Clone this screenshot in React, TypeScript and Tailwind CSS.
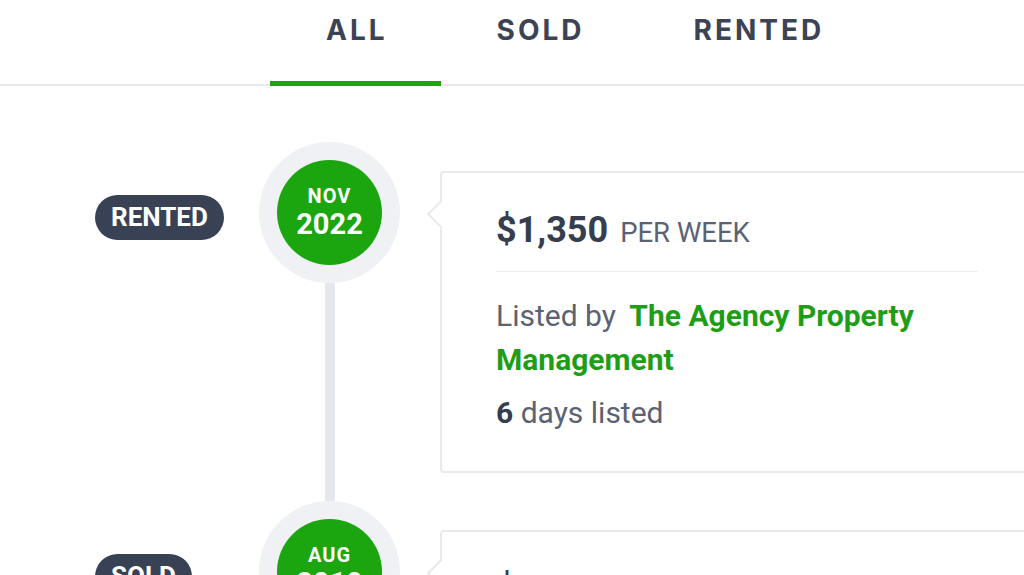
import React from 'react';

type Entry = {
  status: string;
  month: string;
  year: string;
  price: string;
  unit: string;
  agency: string;
  days: string;
};

const ENTRIES: Entry[] = [
  {
    status: 'RENTED',
    month: 'NOV',
    year: '2022',
    price: '$1,350',
    unit: 'PER WEEK',
    agency: 'The Agency Property Management',
    days: '6',
  },
  {
    status: 'SOLD',
    month: 'AUG',
    year: '2019',
    price: '$1,640,000',
    unit: '',
    agency: 'The Agency Eastern Suburbs',
    days: '21',
  },
];

const TABS = ['ALL', 'SOLD', 'RENTED'];

export default function App() {
  return (
    <div
      className="h-[575px] w-[1024px] overflow-hidden bg-white"
      style={{ fontFamily: 'Roboto, "Liberation Sans", sans-serif' }}
    >
      {/* Tabs */}
      <div className="flex h-[86px] border-b-2 border-[#e9eaed] pl-[270px]">
        {TABS.map((t, i) => (
          <div
            key={t}
            className="relative h-full px-[56px] pt-[12px] text-[28px] font-bold leading-[36px] tracking-[3px] text-[#3b4354]"
            style={{ fontFamily: 'Inter, "Liberation Sans", sans-serif' }}
          >
            <span className="mr-[-3px]">{t}</span>
            {i === 0 && (
              <span className="absolute bottom-[-2px] left-0 right-0 h-[5px] bg-[#1ba50f]" />
            )}
          </div>
        ))}
      </div>

      {/* Timeline */}
      <div className="pt-[56px]">
        {ENTRIES.map((e) => (
          <TimelineRow key={e.year} entry={e} />
        ))}
      </div>
    </div>
  );
}

function TimelineRow({ entry }: { entry: Entry }) {
  return (
    <div className="flex">
      <div className="w-[259px] shrink-0 pl-[95px] pt-[53px]">
        <span className="inline-block rounded-full bg-[#394155] px-[16px] text-[26px] font-bold leading-[45px] text-white">
          {entry.status}
        </span>
      </div>

      <div className="flex w-[141px] shrink-0 flex-col items-center">
        <div className="rounded-full bg-[#eff1f5] p-[18px]">
          <div className="flex h-[105px] w-[105px] flex-col items-center justify-center rounded-full bg-[#1ba50f] text-white">
            <span className="text-[20px] font-bold leading-[22px] tracking-[1px]">{entry.month}</span>
            <span className="text-[29px] font-bold leading-[34px]">{entry.year}</span>
          </div>
        </div>
        <div className="w-[10px] flex-1 bg-[#e4e7ee]" />
      </div>

      <div className="mb-[28px] ml-[40px] mt-[29px] shrink-0">
        <div className="relative w-[640px] rounded-[4px] border-2 border-[#e9eaec] bg-white pb-[36px] pl-[54px] pr-[54px] pt-[35px]">
          <span className="absolute left-[-11px] top-[31px] h-[20px] w-[20px] rotate-45 border-b-2 border-l-2 border-[#e9eaec] bg-white" />
          <div className="flex w-[482px] items-baseline gap-[12px] border-b border-[#eceef1] pb-[16px] leading-[44px]">
            <span className="text-[36px] font-bold text-[#353d4e]">{entry.price}</span>
            {entry.unit && <span className="text-[27.5px] text-[#5b6272]">{entry.unit}</span>}
          </div>
          <p className="mt-[22px] w-[440px] text-[30px] leading-[44px] text-[#5b6272]">
            Listed by{' '}
            <span className="ml-[6px] font-bold text-[#1f9d16]">{entry.agency}</span>
          </p>
          <p className="mt-[9px] text-[30px] leading-[44px] text-[#5b6272]">
            <span className="font-bold text-[#353d4e]">{entry.days}</span> days listed
          </p>
        </div>
      </div>
    </div>
  );
}
